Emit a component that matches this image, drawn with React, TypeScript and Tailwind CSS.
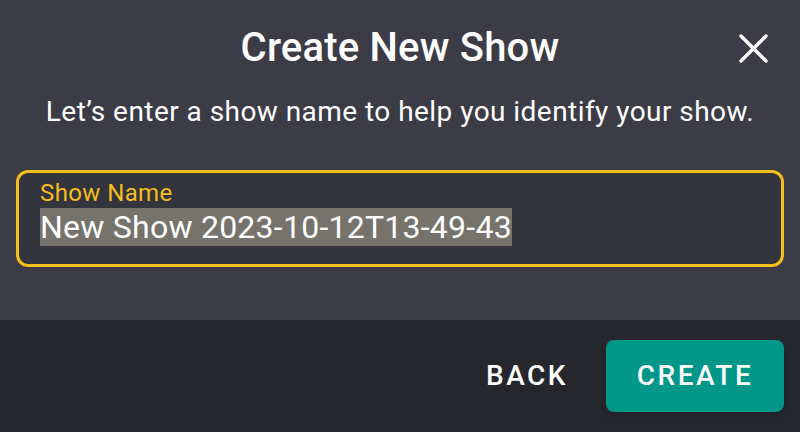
export default function App() {
  return (
    <div className="w-[800px] h-[432px] flex flex-col bg-[#3b3c45] font-['Roboto',sans-serif] text-white overflow-hidden">
      {/* Body */}
      <div className="h-[320px] flex flex-col px-4">
        <div className="relative h-[96px] flex items-center justify-center">
          <h1 className="text-[40px] font-medium leading-none tracking-[0.2px]">Create New Show</h1>
          <button className="absolute right-[16px] top-[34px] text-white">
            <svg width="29" height="29" viewBox="0 0 29 29" fill="none" stroke="currentColor" strokeWidth="3.4" strokeLinecap="round">
              <path d="M2 2 L27 27 M27 2 L2 27" />
            </svg>
          </button>
        </div>
        <p className="text-center text-[28px] leading-[32px] tracking-[0.45px] text-white">
          Let’s enter a show name to help you identify your show.
        </p>
        <div className="mt-[42px] h-[97px] rounded-[12px] border-[3px] border-[#f4be1c] bg-[#33343c] px-[21px] pt-[6px]">
          <div className="text-[24px] leading-[28px] tracking-[0.4px] text-[#f4be1c]">Show Name</div>
          <div className="text-[32px] leading-[40px] tracking-[0.25px]">
            <span className="bg-[#75736b]">New Show 2023-10-12T13-49-43</span>
          </div>
        </div>
      </div>
      {/* Footer */}
      <div className="flex-1 bg-[#26272d] flex items-center justify-end gap-[18px] pr-4">
        <button className="h-[72px] px-5 text-[28px] font-medium tracking-[2.5px] uppercase">Back</button>
        <button className="h-[72px] w-[178px] rounded-[8px] bg-[#009688] text-[28px] font-medium tracking-[2.5px] uppercase shadow-md">
          Create
        </button>
      </div>
    </div>
  );
}
